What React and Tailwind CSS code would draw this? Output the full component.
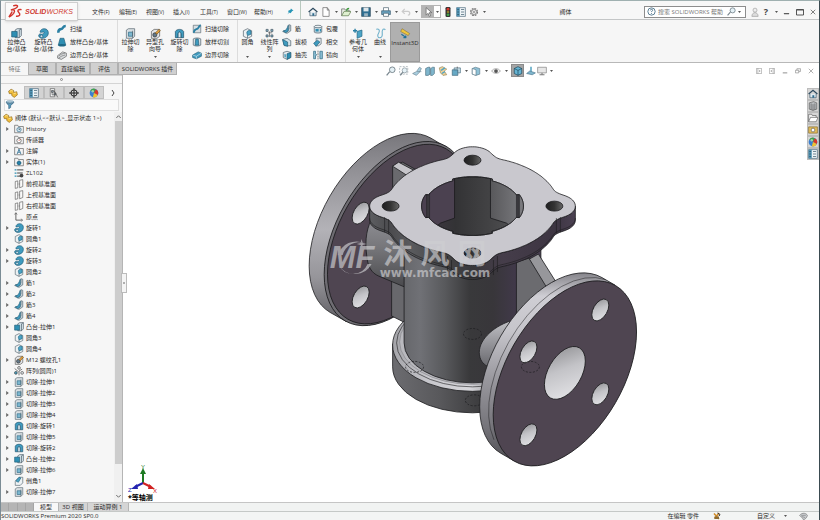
import React, { useState } from 'react';

const glyphs = {
    boss: <><path d="M6 3l3-2h6v10l-3 3H6z" fill="#d5e3ea" stroke="#40525e" /><path d="M1 5h8v8H1z" fill="#2f8fb3" stroke="#1d5a75" /><path d="M12 3v11M12 3l3-2" stroke="#40525e" /></>,
    revolve: <><path d="M3 6c0-3 3-5 6-5 4 0 6 3 6 6 0 5-4 8-9 8-3 0-5-2-5-4 0-2 2-3 4-2 2 0 4-1 4-3-2-1-3 1-6 0z" fill="#3f9bbf" stroke="#1e5b77" /><circle cx="5" cy="12" r="2" fill="#cfe3ec" stroke="#1e5b77" /></>,
    sweep: <path d="M2 14c0-4 1-6 5-6 3 0 2-5 7-5" fill="none" stroke="#2a7fa3" strokeWidth="4" />,
    loft: <><path d="M5 2h6l3 11H2z" fill="#2f8fb3" stroke="#1d5a75" /><ellipse cx="8" cy="13" rx="6" ry="2" fill="#1f6886" /></>,
    boundary: <><path d="M1 9l8-6 6 2v5l-8 5-6-2z" fill="#d9dcde" stroke="#555" /><path d="M3 10c3-4 6-4 10-5M3 13c3-3 6-4 10-5" fill="none" stroke="#666" /></>,
    cut: <><path d="M2 3l3-2h9v11l-3 3H2z" fill="#d8dfe3" stroke="#55636c" /><path d="M5 6h6v6H5z" fill="#7cb7cf" stroke="#2d6a86" /><path d="M11 4v11" stroke="#55636c" /></>,
    cutRevolve: <><path d="M2 14V5c2-4 10-4 12 0v9h-4V8H6v6z" fill="#3f9bbf" stroke="#1e4f68" /><path d="M6 8l2-3 2 3v6H6z" fill="#dbe8ee" stroke="#1e4f68" /></>,
    cutSweep: <><path d="M2 2h12v12H2z" fill="#d8dfe3" stroke="#55636c" /><path d="M3 14c0-5 2-5 5-6 3 0 2-5 6-6" stroke="#2a7fa3" strokeWidth="3" /></>,
    cutLoft: <><path d="M2 3c3-2 9-2 12 0v10c-3 2-9 2-12 0z" fill="#d8dfe3" stroke="#40525e" /><path d="M6 3h4l1 10H5z" fill="#3f9bbf" stroke="#1d5a75" /></>,
    cutBoundary: <><path d="M1 8l9-5 5 2v5l-8 4-6-2z" fill="#3f9bbf" stroke="#1d5a75" /><path d="M1 8l6 2 8-5M7 10v4" fill="none" stroke="#d5e9f1" /></>,
    hole: <><path d="M2 5l4-3h8v10l-4 3H2z" fill="#e2e4e6" stroke="#555" /><circle cx="7" cy="10" r="3" fill="#63798a" stroke="#333" /><path d="M8 7l5-5 2 2-5 5z" fill="#e7a341" stroke="#704c12" /></>,
    fillet: <><path d="M2 4l6-3 6 3v8l-6 3-6-3z" fill="#edf1f3" stroke="#50606a" /><path d="M7 7c0-3 3-4 6-3v5l-5 2z" fill="#4ca4c6" stroke="#1f6582" /><path d="M8 11v4" stroke="#50606a" /></>,
    chamfer: <><path d="M2 8l6-6h6v9l-4 4H2z" fill="#edf1f3" stroke="#50606a" /><path d="M3 8l5-6 3 1-4 7z" fill="#4ca4c6" stroke="#1f6582" /></>,
    rib: <><path d="M1 12l7 3 6-4V2l-3-1v7z" fill="#c4ccd1" stroke="#4f6470" /><path d="M2 11c5 0 6-4 8-9v9l-4 3z" fill="#3f9bbf" stroke="#1e5b77" /></>,
    draft: <><path d="M1 4l7-2 6 4v8H4z" fill="#d5e3ea" stroke="#40525e" /><path d="M1 4l8 4v7l-6-2z" fill="#3f9bbf" stroke="#1d5a75" /></>,
    shell: <><path d="M2 4l6-2 6 2v8l-6 3-6-3z" fill="#e5ebee" stroke="#40525e" /><path d="M8 6l6-2v8l-6 3z" fill="#2f8fb3" stroke="#1d5a75" /><path d="M4 6v5l2 1V7z" fill="#2f8fb3" /></>,
    wrap: <><path d="M2 4v9c2 2 10 2 12 0V4z" fill="#cddbe2" stroke="#40525e" /><ellipse cx="8" cy="4" rx="6" ry="2" fill="#edf3f5" stroke="#40525e" /><path d="M4 8h5v4H4zM11 8h2v4h-2z" fill="#2f8fb3" /></>,
    intersect: <><path d="M5 2h8v9l-4 3H5z" fill="#e5ebee" stroke="#40525e" /><path d="M1 10l6-5 4 3-6 7z" fill="#3f9bbf" stroke="#1d5a75" /></>,
    mirror: <><path d="M1 2v12h3V9l2-1-2-2V2zM15 2v12h-4V2z" fill="#8fc2d7" stroke="#1d5a75" /><path d="M8 1v14" stroke="#333" strokeDasharray="3 1" /></>,
    pattern: <><path d="M3 2h3v3H3zM10 2h3v3h-3zM3 10h3v3H3zM10 10h3v3h-3z" fill="#89b6c9" stroke="#40525e" /><path d="M6 7l6 0M8 5v8" stroke="#555" /></>,
    circPattern: <><circle cx="8" cy="3" r="2.2" fill="#e0e4e6" stroke="#444" /><circle cx="3" cy="11" r="2.2" fill="#4ca4c6" stroke="#333" /><circle cx="13" cy="11" r="2.2" fill="#e0e4e6" stroke="#444" /><path d="M1 4l6 5M8 15V8l5-3" stroke="#333" fill="none" /></>,
    refGeo: <><path d="M6 5l7-2v9l-7 3z" fill="#4ca4c6" stroke="#1f6582" /><path d="M3 1v6M0 4h6" stroke="#2a7fa3" strokeWidth="2" /></>,
    curve: <path d="M2 2c5-2 5 3 3 6s-1 7 3 6c5-1 1-8 3-11 1-2 3-2 4 0" fill="none" stroke="#6fb0ca" strokeWidth="1.6" />,
    instant: <><path d="M3 1l11 7-2 3L1 5z" fill="#f0c63c" stroke="#6a5620" strokeWidth=".6" /><path d="M2 9l7 5M9 14l-1-3M9 14l-4 0" stroke="#1c6f97" strokeWidth="1.6" /></>,
    home: <><path d="M3 8v6h10V8" fill="#dfe9ef" stroke="#2d4a5f" /><path d="M1 8l7-6 7 6" fill="none" stroke="#2d4a5f" strokeWidth="2" /><path d="M7 10h3v4H7z" fill="#2d6a8c" /></>,
    doc: <path d="M3 1h7l3 4v10H3zM10 1v4h3" fill="#fff" stroke="#555" />,
    open: <><path d="M1 14V3h5l1 2h6v3" fill="#e9efe4" stroke="#555" /><path d="M1 14l4-7h11l-4 7z" fill="#dff0d0" stroke="#4b6b3a" /><path d="M9 6c0-3 2-4 4-4" fill="none" stroke="#3b9b39" strokeWidth="2" /></>,
    save: <><path d="M1 1h14v14H1z" fill="#2f6f92" stroke="#2a4454" /><path d="M4 1h8v6H4z" fill="#dfe6ea" /><path d="M5 10h6v5H5z" fill="#9ab4c2" /></>,
    print: <><path d="M4 6V1h8v5" fill="#fff" stroke="#3d5563" /><path d="M1 6h14v6H1z" fill="#6ba3bf" stroke="#2e5266" /><path d="M4 10h8v5H4z" fill="#fff" stroke="#3d5563" /></>,
    undo: <path d="M6 3L2 7l4 4M2 7h9c4 0 4 6 0 6" fill="none" stroke="#cbcbcb" strokeWidth="2" />,
    cursor: <path d="M5 1v12l3-3 2 5 2-1-2-5h4z" fill="#fff" stroke="#555" />,
    lights: <><rect x="4" y="0" width="8" height="16" rx="2" fill="#333" /><circle cx="8" cy="3.5" r="2.2" fill="#d8372c" /><circle cx="8" cy="8" r="2" fill="#8c7d2c" /><circle cx="8" cy="12.5" r="2.2" fill="#3fa24a" /></>,
    list: <><path d="M1 1h14v14H1z" fill="#eef4f7" stroke="#3f5f72" /><path d="M1 1h5v14H1z" fill="#4f93b3" /><path d="M8 4h5M8 8h5M8 12h5M2 4h3M2 8h3M2 12h3" stroke="#26485b" /></>,
    gear: <><circle cx="8" cy="8" r="5.5" fill="none" stroke="#777" strokeWidth="2" strokeDasharray="3 1.3" /><circle cx="8" cy="8" r="4" fill="#eee" stroke="#666" /><circle cx="8" cy="8" r="1.5" fill="#888" /></>,
    pin: <path d="M9 1l6 5-3 1-3 4-2 1-2-2-4 5 3-6-2-2 6-3z" fill="#2795b6" />,
    part: <><path d="M1 5l4-3 4 2v3l5-1 1 5-5 4-4-3V9L2 9z" fill="#f0bd3b" stroke="#8a651a" /><path d="M3 5l3-1 2 1M9 9l4-1" stroke="#fff2b8" fill="none" /></>,
    config: <><path d="M2 1h7v13H2z" fill="#f4f6f7" stroke="#555" /><path d="M4 4h3v3H4zM8 8h3v3H8z" fill="#89a" stroke="#444" /><path d="M8 4l6 11M5 7v4h4" stroke="#444" fill="none" /></>,
    target: <><circle cx="8" cy="8" r="5" fill="none" stroke="#222" strokeWidth="1.6" /><path d="M8 0v16M0 8h16" stroke="#222" strokeWidth="1.6" /></>,
    ball: <><circle cx="8" cy="8" r="7" fill="#3b7fd0" /><path d="M8 8L2 4a7 7 0 0 1 9-2z" fill="#3fa24a" /><path d="M8 8l3-6a7 7 0 0 1 3 9z" fill="#d8372c" /><path d="M8 8l6 3a7 7 0 0 1-8 4z" fill="#f1c12e" /><circle cx="6" cy="5" r="2" fill="#fff" opacity=".5" /></>,
    filter: <><ellipse cx="8" cy="3" rx="6" ry="1.6" fill="#d6e5ee" stroke="#2d6a8c" /><path d="M2 4l4 5v5l3-2V9l5-5c-2 2-10 2-12 0z" fill="#5b9fc0" stroke="#2d5a78" /></>,
    folder: <><path d="M1 14V2h5l1 2h6v3" fill="#f2f2f2" stroke="#555" /><path d="M1 14l3-7h12l-3 7z" fill="#fff" stroke="#555" /></>,
    history: <><path d="M1 14V2h5l1 2h8v10z" fill="#f2f2f2" stroke="#555" /><circle cx="8" cy="9" r="3.5" fill="#cfe3ec" stroke="#2d6a8c" /><path d="M8 7v2l2-1" stroke="#2d4a5f" fill="none" /></>,
    sensor: <><path d="M1 14V2h5l1 2h8v10z" fill="#f2f2f2" stroke="#555" /><circle cx="8" cy="9" r="3.5" fill="#fff" stroke="#444" /><path d="M8 9l2-2" stroke="#c32" strokeWidth="1.5" /></>,
    note: <><path d="M1 14V2h5l1 2h8v10z" fill="#f2f2f2" stroke="#555" /><path d="M5 13l3-8 3 8M6 10h4" stroke="#20658c" strokeWidth="1.2" fill="none" /></>,
    solid: <><path d="M1 14V2h5l1 2h8v10z" fill="#f2f2f2" stroke="#555" /><path d="M5 8l3-2 3 2v3l-3 2-3-2z" fill="#2380aa" stroke="#114d69" /></>,
    material: <><path d="M1 3h3M1 8h3M1 13h3" stroke="#2f8fb3" strokeWidth="2" /><path d="M5 3h10M5 8h9M5 13h5" stroke="#444" strokeWidth="1.6" /><circle cx="12" cy="12" r="3" fill="#444" /></>,
    plane: <><path d="M2 4l4-1v11l-4 1z M9 2l5-1v11l-5 2z" fill="#fafafa" stroke="#555" /><path d="M6 8h3" stroke="#444" strokeDasharray="1 1" /></>,
    origin: <><path d="M3 2v11h9" fill="none" stroke="#444" strokeWidth="1.3" /><path d="M1 4l2-3 2 3M11 11l3 2-3 2" fill="none" stroke="#444" /></>,
    zoomFit: <><circle cx="10" cy="6" r="4.5" fill="#e5f1f6" stroke="#77858d" strokeWidth="1.5" /><path d="M6 9l-5 6" stroke="#77858d" strokeWidth="2" /></>,
    zoomArea: <><path d="M1 1h13v12H1z" fill="none" stroke="#8a979e" strokeDasharray="3 2" /><circle cx="9" cy="7" r="4" fill="#e5f1f6" stroke="#77858d" /><path d="M6 10l-4 5" stroke="#77858d" strokeWidth="2" /></>,
    prevView: <><path d="M1 12l6-3 5-7 3 2-3 6-5 5z" fill="#a9cfe0" stroke="#66808e" /><path d="M8 9h7" stroke="#66808e" /></>,
    section: <><path d="M1 4l4-2h3v11l-3 2H1zM9 4l3-2h3v10l-3 3H9z" fill="#7fb6cd" stroke="#4a6c7c" /></>,
    dynamic: <><path d="M2 3l5-2 7 4-4 3 4 6-6 1-4-4z" fill="#ecd09a" stroke="#93804f" /><path d="M5 7l6-4M6 12l5-3" stroke="#4ca4c6" strokeWidth="2" /></>,
    orient: <><path d="M2 6h9v9H2z" fill="#67a9c5" stroke="#3c6376" /><path d="M5 3h10v8h-4V6H5z" fill="#c9dfe8" stroke="#3c6376" /><path d="M10 1v3" stroke="#333" /></>,
    style: <><path d="M2 4l5-2 7 2v9l-6 2-6-2z" fill="#8fc2d7" stroke="#5a7787" /><path d="M2 4l6 2v9l-6-2z" fill="#fff" stroke="#5a7787" /></>,
    eye: <><path d="M1 8c3-5 11-5 14 0-3 5-11 5-14 0z" fill="#f3f3f3" stroke="#8c8c8c" /><circle cx="8" cy="8" r="3" fill="#555" /></>,
    cube: <><path d="M8 1l6 3v8l-6 3-6-3V4z" fill="#65b4d3" stroke="#143c4f" /><path d="M2 4l6 3 6-3M8 7v8" fill="none" stroke="#143c4f" /></>,
    scene: <><path d="M8 1v8" stroke="#2f8fb3" strokeWidth="2" /><path d="M1 12l5-4 9 3-5 3z" fill="#7fb6cd" stroke="#44718a" /></>,
    monitor: <><path d="M1 2h14v9H1z" fill="#e7e7e7" stroke="#777" /><path d="M8 11v3M4 14h8" stroke="#777" strokeWidth="1.6" /></>,
    tools: <><path d="M2 3l10 11M12 2L3 13" stroke="#d08a25" strokeWidth="3" /><path d="M9 2l5 3-2 3" stroke="#333" strokeWidth="2" fill="none" /><path d="M3 9h9v5H3z" fill="#8b6a32" /></>,
    library: <><path d="M2 3l7-2 5 2v10l-6 2-6-2z" fill="#b9bcbf" stroke="#555" /><path d="M5 4v10M8 5v10M11 4v10" stroke="#555" /></>,
    palette: <><path d="M1 3h14v10H1z" fill="#e3bd5c" stroke="#7d6528" /><circle cx="8" cy="8" r="3" fill="#fff" stroke="#555" /></>,
    user: <><circle cx="8" cy="5" r="3.2" fill="#eee" stroke="#999" /><path d="M3 15c0-8 10-8 10 0z" fill="#ddd" stroke="#999" /></>,
    help: <><circle cx="8" cy="8" r="6.5" fill="#fff" stroke="#35617c" strokeWidth="1.4" /><path d="M6 6c0-3 5-2 4 0 0 1-2 1-2 3M8 11v1.5" fill="none" stroke="#35617c" strokeWidth="1.5" /></>,
    min: <path d="M2 13h12" stroke="currentColor" strokeWidth="2.5" />,
    max: <path d="M1 3h14v11H1zM1 4h14" fill="none" stroke="currentColor" strokeWidth="1.8" />,
    close: <path d="M2 2l12 12M14 2L2 14" stroke="currentColor" strokeWidth="1.8" />,
    restore: <path d="M1 6h9v7H1zM5 6V2h10v7h-5" fill="none" stroke="currentColor" strokeWidth="1.8" />,
    paneLeft: <path d="M1 1h14v14H1zM5 1v14M12 8H8l2-2M8 8l2 2" fill="none" stroke="currentColor" strokeWidth="1.5" />,
    paneRight: <path d="M1 1h14v14H1zM11 1v14M4 8h4L6 6M8 8l-2 2" fill="none" stroke="currentColor" strokeWidth="1.5" />,
    tag: <><path d="M1 6c5-6 12-4 14 0-1 5-5 7-7 8-1-4-5-5-7-8z" fill="#c9cdd0" stroke="#666" /><path d="M4 6h8M5 8l6 2" stroke="#777" /></>,
};

const Icon = ({ name, className = 'size-[10px]' }) => (
    <svg viewBox="0 0 16 16" className={`${className} shrink-0`} fill="none" aria-hidden="true">{glyphs[name]}</svg>
);

const Caret = ({ className = 'w-[10px]' }) => (
    <span className={`${className} flex justify-center`}>
        <svg viewBox="0 0 6 4" className="w-[3px] h-[2px]"><path d="M0 0h6L3 4z" fill="#555" /></svg>
    </span>
);

const menus = [['文件', 'F'], ['编辑', 'E'], ['视图', 'V'], ['插入', 'I'], ['工具', 'T'], ['窗口', 'W'], ['帮助', 'H']];

const ribbonTabs = [
    { label: '草图', width: 'w-[28px]' },
    { label: '直接编辑', width: 'w-[34px]' },
    { label: '评估', width: 'w-[28px]' },
    { label: 'SOLIDWORKS 插件', width: 'w-[59px]' },
];

const tree = [
    ['history', 'History', true], ['sensor', '传感器'], ['note', '注解', true], ['solid', '实体(1)', true],
    ['material', 'ZL102'], ['plane', '前视基准面'], ['plane', '上视基准面'], ['plane', '右视基准面'], ['origin', '原点'],
    ['revolve', '旋转1', true], ['fillet', '圆角1'], ['revolve', '旋转2', true], ['revolve', '旋转3', true], ['fillet', '圆角2'],
    ['rib', '筋1', true], ['rib', '筋2', true], ['rib', '筋3', true], ['rib', '筋4', true], ['boss', '凸台-拉伸1', true],
    ['fillet', '圆角3'], ['fillet', '圆角4'], ['hole', 'M12 螺纹孔1', true], ['circPattern', '阵列(圆周)1'],
    ['cut', '切除-拉伸1', true], ['cut', '切除-拉伸2', true], ['cut', '切除-拉伸3', true], ['cut', '切除-拉伸4', true],
    ['cutRevolve', '切除-旋转1', true], ['cut', '切除-拉伸5', true], ['cutRevolve', '切除-旋转2', true],
    ['boss', '凸台-拉伸2', true], ['cut', '切除-拉伸6', true], ['chamfer', '倒角1'], ['cut', '切除-拉伸7', true],
];

const TitleBar = () => (
    <header className="flex items-center h-[19px] bg-[#f7f7f7] border-b border-[#c4c6c7] shrink-0">
        <div className="relative z-10 ml-[4px] mt-[3px] flex items-center w-[73px] h-[19px] bg-[#fafafa] border border-[#cfcfcf] shadow-sm shrink-0">
            <svg viewBox="0 0 32 32" className="size-[15px] ml-[2px]" fill="none" stroke="#d2342c" strokeWidth="3">
                <path d="M11 4c9-3 12 0 7 4-4 3-9 4-12 5 8-2 10 1 6 7-3 4-6 6-10 8M9 16c-3 6-5 8-7 12" />
                <path d="M29 12c-8-1-10 2-6 6s3 9-6 8" />
            </svg>
            <span className="ml-[2px] text-[7px] leading-none italic text-[#cf3a33] font-['Liberation_Sans',sans-serif]"><b>SOLID</b>WORKS</span>
        </div>
        <nav className="flex ml-[14px] mt-[3px] shrink-0">
            {menus.map(([label, key]) => (
                <button key={key} className="w-[27px] text-left whitespace-nowrap">{label}<span className="text-[5px]">({key})</span></button>
            ))}
        </nav>
        <button aria-label="固定" className="w-[20px] pt-[3px] flex justify-center border-r border-[#b9c9bf] h-full items-center shrink-0"><Icon name="pin" className="size-[7px]" /></button>
        <div className="flex items-center ml-[7px] mt-[3px] shrink-0">
            <button aria-label="主页" className="mr-[3px]"><Icon name="home" /></button>
            {['doc', 'open', 'save', 'print', 'undo'].map((name) => (
                <button key={name} aria-label={name} className="flex items-center"><Icon name={name} /><Caret /></button>
            ))}
            <button aria-label="选择" className="flex items-center h-[13px] border border-[#b5b5b5] bg-white">
                <span className="w-[12px] h-full flex items-center justify-center bg-[#b4b4b4]"><Icon name="cursor" /></span>
                <Caret className="w-[6px]" />
            </button>
            <button aria-label="重建" className="ml-[2px]"><Icon name="lights" /></button>
            <button aria-label="文件属性" className="ml-[3px]"><Icon name="list" /></button>
            <button aria-label="选项" className="ml-[3px] flex items-center"><Icon name="gear" /><Caret /></button>
        </div>
        <h1 className="flex-1 text-center mt-[3px] pr-[2px]">阀体</h1>
        <div className="flex items-center w-[102px] h-[12px] mt-[3px] px-[2px] border border-[#8d8d8d] bg-white shrink-0">
            <Icon name="help" className="size-[9px]" />
            <input aria-label="搜索帮助" placeholder="搜索 SOLIDWORKS 帮助" className="flex-1 min-w-0 ml-[2px] bg-transparent outline-none placeholder:text-[#777]" />
            <Icon name="zoomFit" className="size-[9px]" />
            <Caret className="w-[7px]" />
        </div>
        <div className="flex items-center text-[#444] ml-[4px] mt-[3px] shrink-0">
            <button aria-label="用户"><Icon name="user" /></button>
            <button className="w-[12px] text-[9px] leading-none font-bold">?</button>
            <Caret className="w-[8px]" />
            <button aria-label="最小化" className="w-[13px] flex justify-center"><Icon name="min" className="size-[7px]" /></button>
            <button aria-label="最大化" className="w-[13px] flex justify-center"><Icon name="max" className="size-[8px]" /></button>
            <button aria-label="关闭" className="w-[13px] flex justify-center"><Icon name="close" className="size-[6px]" /></button>
        </div>
    </header>
);

const BigButton = ({ icon, lines, width, caret }) => (
    <button className={`${width} flex flex-col items-center h-full pt-[8px] leading-[7px]`}>
        <Icon name={icon} className="size-[11px]" />
        {lines.map((line) => <span key={line} className="whitespace-nowrap">{line}</span>)}
        {caret && <span className="mt-auto pb-[4px]"><Caret /></span>}
    </button>
);

const SmallColumn = ({ items, width }) => (
    <div className={`${width} flex flex-col pt-[2px]`}>
        {items.map(([icon, label]) => (
            <button key={label} className="flex items-center gap-[3px] h-[13px] whitespace-nowrap"><Icon name={icon} />{label}</button>
        ))}
    </div>
);

const Ribbon = () => (
    <div className="flex h-[43px] bg-[#f6f6f6] border-b border-[#b8b8b8] shrink-0">
        <div className="flex pl-[2px] border-r border-[#dcdcdc]">
            <BigButton icon="boss" lines={['拉伸凸', '台/基体']} width="w-[27px]" />
            <BigButton icon="revolve" lines={['旋转凸', '台/基体']} width="w-[27px]" />
            <SmallColumn items={[['sweep', '扫描'], ['loft', '放样凸台/基体'], ['boundary', '边界凸台/基体']]} width="w-[60px]" />
        </div>
        <div className="flex border-r border-[#dcdcdc]">
            <BigButton icon="cut" lines={['拉伸切', '除']} width="w-[25px]" />
            <BigButton icon="hole" lines={['异型孔', '向导']} width="w-[24px]" caret />
            <BigButton icon="cutRevolve" lines={['旋转切', '除']} width="w-[25px]" />
            <SmallColumn items={[['cutSweep', '扫描切除'], ['cutLoft', '放样切割'], ['cutBoundary', '边界切除']]} width="w-[45px]" />
        </div>
        <div className="flex border-r border-[#dcdcdc]">
            <BigButton icon="fillet" lines={['圆角']} width="w-[19px]" caret />
            <BigButton icon="pattern" lines={['线性阵', '列']} width="w-[25px]" caret />
            <SmallColumn items={[['rib', '筋'], ['draft', '拔模'], ['shell', '抽壳']]} width="w-[31px]" />
            <SmallColumn items={[['wrap', '包覆'], ['intersect', '相交'], ['mirror', '镜向']]} width="w-[32px]" />
        </div>
        <BigButton icon="refGeo" lines={['参考几', '何体']} width="w-[24px]" caret />
        <BigButton icon="curve" lines={['曲线']} width="w-[20px]" caret />
        <button className="w-[30px] h-[40px] mt-[2px] pt-[5px] flex flex-col items-center bg-[#b0b0b0] border border-[#9a9a9a]">
            <Icon name="instant" className="size-[11px]" />
            Instant3D
        </button>
    </div>
);

const ViewToolbar = () => (
    <div className="flex items-center h-[13px] mt-[1px]">
        {['zoomFit', 'zoomArea', 'prevView', 'section', 'dynamic'].map((name) => (
            <button key={name} aria-label={name} className="w-[13px]"><Icon name={name} /></button>
        ))}
        {['orient', 'style', 'eye'].map((name) => (
            <button key={name} aria-label={name} className="flex items-center"><Icon name={name} /><Caret /></button>
        ))}
        <button aria-label="上色" className="size-[13px] flex items-center justify-center bg-[#a5a5a5] border border-[#8b8b8b]"><Icon name="cube" /></button>
        <button aria-label="布景" className="w-[13px] flex justify-center"><Icon name="scene" /></button>
        <button aria-label="视图设定" className="flex items-center"><Icon name="monitor" /><Caret className="w-[8px]" /></button>
    </div>
);

const FeaturePanel = () => {
    const [selected, setSelected] = useState(null);

    return (
        <aside className="w-[122px] flex flex-col bg-[#f6f6f6] border-r border-[#b5b5b5] shrink-0">
            <div className="h-[9px] border-y border-[#d4d4d4] flex items-center justify-center shrink-0">
                <span className="size-[3px] rounded-full border border-[#888]" />
            </div>
            <div className="flex h-[15px] pt-[2px] pl-[1px] shrink-0">
                <button aria-label="特征树" className="w-[22px] flex items-center justify-center"><Icon name="part" /></button>
                {['list', 'config', 'target', 'ball'].map((name) => (
                    <button key={name} aria-label={name} className="w-[20px] flex items-center justify-center bg-[#d3d3d3] border border-[#bdbdbd]"><Icon name={name} /></button>
                ))}
                <button aria-label="更多" className="flex-1 flex justify-center items-center">
                    <svg viewBox="0 0 4 6" className="w-[4px] h-[6px]" fill="none" stroke="#444"><path d="M1 0l2 3-2 3" /></svg>
                </button>
            </div>
            <div className="flex items-center h-[12px] mx-[3px] border border-[#dedede] bg-[#fafafa] shrink-0">
                <Icon name="filter" />
                <input aria-label="过滤" className="flex-1 min-w-0 bg-transparent outline-none" />
            </div>
            <div className="flex flex-1 min-h-0 pt-[1px]">
                <div className="flex-1 min-w-0 overflow-hidden">
                    <div className="flex items-center h-[11px] pl-[2px] gap-[2px] whitespace-nowrap"><Icon name="part" />阀体 (默认&lt;&lt;默认&gt;_显示状态 1&gt;)</div>
                    <ul>
                        {tree.map(([icon, label, open]) => (
                            <li key={label}>
                                <button
                                    onClick={() => setSelected(label)}
                                    className={`flex items-center w-full h-[11px] whitespace-nowrap ${selected === label ? 'bg-[#cde4f2]' : ''}`}
                                >
                                    <span className="w-[13px] flex justify-center">
                                        {open && <svg viewBox="0 0 4 6" className="w-[3px] h-[4px]"><path d="M0 0l4 3-4 3z" fill="#666" /></svg>}
                                    </span>
                                    <Icon name={icon} />
                                    <span className="ml-[2px]">{label}</span>
                                </button>
                            </li>
                        ))}
                    </ul>
                </div>
                <div className="w-[8px] flex flex-col items-center bg-[#f0f0f0]">
                    <svg viewBox="0 0 6 4" className="w-[5px] h-[3px] my-[3px] shrink-0" fill="none" stroke="#444"><path d="M0 4l3-3 3 3" /></svg>
                    <div className="w-[7px] h-[88%] bg-[#cdcdcd]" />
                    <svg viewBox="0 0 6 4" className="w-[5px] h-[3px] mt-auto mb-[4px] shrink-0" fill="none" stroke="#444"><path d="M0 0l3 3 3-3" /></svg>
                </div>
            </div>
        </aside>
    );
};

// Cover flange outline: disc plus four lugs, blended with a small fillet
const CX = 473;
const CY = 206;
const K = 0.577;
const lugs = [[82, 0], [0, 82], [-82, 0], [0, -82]];

const coverDistance = (x, y) => {
    const disc = Math.hypot(x, y) - 86;
    const lug = Math.min(...lugs.map(([lx, ly]) => Math.hypot(x - lx, y - ly) - 21));
    const h = Math.max(9 - Math.abs(disc - lug), 0) / 9;
    return Math.min(disc, lug) - (h * h * 9) / 4;
};

const polar = (r, deg) => {
    const a = (deg * Math.PI) / 180;
    return [CX + r * Math.cos(a), CY + r * Math.sin(a) * K];
};

const coverPoint = (deg) => {
    const a = (deg * Math.PI) / 180;
    let lo = 60;
    let hi = 120;
    for (let i = 0; i < 18; i++) {
        const mid = (lo + hi) / 2;
        if (coverDistance(mid * Math.cos(a), mid * Math.sin(a)) < 0) lo = mid;
        else hi = mid;
    }
    return polar(lo, deg);
};

// The bore is a little wider at the four axes, where the slots are
const borePoint = (deg) => {
    const off = Math.abs(((deg + 45) % 90) - 45);
    return polar(off < 24 ? 51 : 48, deg);
};

const toPath = (points, dy = 0) => points.map(([x, y]) => `${x.toFixed(1)} ${(y + dy).toFixed(1)}`).join('L');

const frontPoints = Array.from({ length: 181 }, (_, i) => coverPoint(i));
const coverTop = `M${toPath(Array.from({ length: 360 }, (_, i) => coverPoint(i)))}Z`;
const coverSide = `M${toPath(frontPoints)}L${toPath([...frontPoints].reverse(), 14)}Z`;
const coverLip = `M${toPath(frontPoints, 12)}`;
const boreOutline = `M${toPath(Array.from({ length: 360 }, (_, i) => borePoint(i)))}Z`;

const Grad = ({ id, stops, vertical, from, to }) => (
    <linearGradient id={id} gradientUnits="userSpaceOnUse" x1={vertical ? 0 : from} x2={vertical ? 0 : to} y1={vertical ? from : 0} y2={vertical ? to : 0}>
        {stops.map(([offset, color]) => <stop key={offset} offset={offset} stopColor={color} />)}
    </linearGradient>
);

const SideHole = ({ x, y, rx = 7, ry = 12 }) => (
    <ellipse rx={rx} ry={ry} transform={`translate(${x} ${y}) rotate(30)`} fill="url(#sideHole)" />
);

const ValveBody = () => (
    <svg viewBox="123 75 697 427" className="absolute inset-0 w-full h-full" role="img" aria-label="阀体">
        <defs>
            <Grad id="rimL" vertical from={132} to={326} stops={[[0, '#77767b'], [0.2, '#929196'], [0.5, '#b3b2b7'], [0.75, '#96959a'], [1, '#5b5a5f']]} />
            <Grad id="rimR" vertical from={273} to={466} stops={[[0, '#86858b'], [0.12, '#cfced4'], [0.3, '#c6c5cb'], [0.55, '#99989e'], [0.8, '#75747a'], [1, '#4b4a4f']]} />
            <Grad id="body" from={404} to={542} stops={[[0, '#66676b'], [0.12, '#707176'], [0.3, '#58595c'], [0.48, '#39393b'], [0.65, '#38363a'], [0.82, '#41394a'], [1, '#4a4052']]} />
            <Grad id="base" from={393} to={553} stops={[[0, '#6c6c70'], [0.3, '#58585b'], [0.55, '#3c3c3e'], [1, '#3e3945']]} />
            <Grad id="ring" from={393} to={490} stops={[[0, '#a4a4a9'], [0.35, '#c6c6cb'], [0.8, '#d6d6da'], [1, '#a8a8ac']]} />
            <Grad id="cover" from={370} to={576} stops={[[0, '#5d5e61'], [0.1, '#4b4b4e'], [0.2, '#5a5b5e'], [0.36, '#454547'], [0.5, '#39383b'], [0.65, '#453d4a'], [0.9, '#3d3542'], [1, '#4b4152']]} />
            <Grad id="bore" from={430} to={517} stops={[[0, '#3d3741'], [0.3, '#333335'], [0.7, '#434345'], [1, '#525254']]} />
            <Grad id="boreRight" from={491} to={524} stops={[[0, '#58585b'], [1, '#7c7c80']]} />
            <Grad id="neckL" vertical from={218} to={290} stops={[[0, '#8f8f94'], [0.4, '#77777b'], [1, '#464649']]} />
            <Grad id="neckR" vertical from={320} to={370} stops={[[0, '#c2c2c7'], [0.4, '#9b9ba0'], [1, '#626267']]} />
            <linearGradient id="sideHole" x1="0" y1="0" x2="0.7" y2="1">
                <stop offset="0" stopColor="#8b8b8e" />
                <stop offset="0.5" stopColor="#c3c3c7" />
                <stop offset="1" stopColor="#e0e0e3" />
            </linearGradient>
            <linearGradient id="topHole"><stop offset="0" stopColor="#1f1f20" /><stop offset="0.5" stopColor="#333" /><stop offset="1" stopColor="#666" /></linearGradient>
            <clipPath id="boreClip"><path d={boreOutline} /></clipPath>
        </defs>
        <g stroke="#1c1c1e" strokeWidth="0.8" strokeLinejoin="round">
            {/* far flange */}
            <path d="M446.500 147L431.500 138A58.200 100 30 0 0 330.500 312.500L346.500 321.500Z" fill="url(#rimL)" />
            <ellipse rx="58.500" ry="101" transform="translate(396 233.500) rotate(30)" fill="#6e6c72" />
            <ellipse rx="57" ry="98.500" transform="translate(397.500 234) rotate(30)" fill="#4f4551" />
            <SideHole x={361} y={213} />
            <SideHole x={361} y={297} />
            <path d="M393 166l10-4 16 9v30h-26z" fill="#6a6a6e" />
            <path d="M393 166l6-4 15 8-7 5z" fill="#c6c5ca" />
            <path d="M392 270h14v53l-14-7z" fill="#68686c" />
            <path d="M374 216c-7 10-9 24-7 39 1 12 5 18 12 21l26 11v-70z" fill="url(#neckL)" />
            {/* base */}
            <path d="M393 344v23a80 46 0 0 0 160 0v-23z" fill="url(#base)" />
            <ellipse cx={CX} cy="345" rx="80" ry="46.500" fill="url(#ring)" />
            <ellipse cx={CX} cy="343" rx="76" ry="44" fill="url(#ring)" strokeWidth="0.600" />
            <ellipse cx={CX} cy="342" rx="73" ry="42.500" fill="#b9b9be" stroke="#77777b" strokeWidth="0.500" />
            {/* barrel */}
            <path d="M404.500 220v123a68.500 40 0 0 0 137 0V220z" fill="url(#body)" />
            <path d="M517 262l13-4 18 28-31 50z" fill="#6b6b6f" />
            <path d="M530 259l9-5 17 27-9 6z" fill="#97979b" />
            {/* cover */}
            <path d={coverSide} fill="url(#cover)" />
            <path d={coverLip} fill="none" strokeWidth="0.600" />
            <path d={coverTop} fill="#c9c8ce" />
            <path d="M385 217v15M389 219v15M448 256v16M452 260v15M494 260v15M498 256v16M557 218v15M561 217v15" fill="none" strokeWidth="0.600" />
            <path d={boreOutline} fill="url(#bore)" />
            <g clipPath="url(#boreClip)">
                <path d="M420 170h35v48l-14 5-10 8-11-13z" fill="#4b4150" />
                <path d="M526 170h-35v48l16 5 10 8 9-13z" fill="url(#boreRight)" />
                <path d="M427 190h3v30h-3zM517 190h3v30h-3z" fill="#3a383d" strokeWidth="0.500" />
            </g>
            <path d={boreOutline} fill="none" />
            {[[473, 160], [391, 206], [555, 206], [473, 253]].map(([x, y]) => (
                <ellipse key={`${x}-${y}`} cx={x} cy={y} rx="8.500" ry="5" fill="url(#topHole)" />
            ))}
            {/* near flange */}
            <path d="M511 321c-18 6-33 20-31 34 1 7 5 10 9 12z" fill="url(#neckR)" />
            <path d="M615.700 285.100L602.700 277.600A58.300 101 30 0 0 501.200 453.400L514.200 460.900Z" fill="url(#rimR)" />
            <path d="M604.700 278.700A58.600 101.500 30 0 0 493 439" fill="none" strokeWidth="0.500" transform="translate(1.500 1)" />
            <ellipse rx="58.600" ry="101.500" transform="translate(565.500 373.500) rotate(30)" fill="#4f4551" />
            <SideHole x={565.5} y={373} rx={16.7} ry={29} />
            <SideHole x={601} y={310} />
            <SideHole x={529} y={352} />
            <SideHole x={601} y={394} />
            <SideHole x={529} y={435} />
            <g fill="none" strokeDasharray="2 1.500" strokeWidth="0.700">
                <ellipse cx="473" cy="334" rx="9" ry="5.500" />
                <ellipse cx="415" cy="367" rx="9" ry="5.500" />
                <path d="M480 396a9 5.500 0 1 0 0 9" />
                <ellipse cx="531" cy="367" rx="9" ry="5.500" />
            </g>
        </g>
        {/* site mark */}
        <g fill="#cfcfd2" opacity="0.650" fontWeight="bold">
            <path d="M365 243a20 20 0 0 0-27 12h5a17 17 0 0 1 22-12zM339 265a19 19 0 0 0 33-1h-4a16 16 0 0 1-29 1zM362 239l1 4 4 1-4 1-1 4-1-4-4-1 4-1z" />
            <text x="330" y="268" fontSize="31" fontStyle="italic" fontFamily="Liberation Sans, sans-serif">MF</text>
            <g fontSize="29" fontFamily="Noto Sans CJK SC, sans-serif">
                <text x="384" y="264">沐</text>
                <text x="421" y="264">风</text>
                <text x="458" y="264">网</text>
            </g>
            <text x="380" y="277" fontSize="12" fontFamily="DejaVu Sans, sans-serif">www.mfcad.com</text>
        </g>
    </svg>
);

const Viewport = () => (
    <main className="relative flex-1 bg-white">
        <ValveBody />
        <div className="absolute left-[5px] bottom-0">
            <svg viewBox="0 0 34 30" className="w-[34px] h-[30px]" strokeWidth="2">
                <path d="M15 19V9" stroke="#1d7a22" />
                <path d="M12 10l3-6 3 6z" fill="#1d7a22" />
                <path d="M15 19l-8 4" stroke="#2424b0" />
                <path d="M9 20l-6 5 7 0z" fill="#2424b0" />
                <path d="M15 19l8 4" stroke="#d02222" />
                <path d="M21 20l6 5-7 0z" fill="#d02222" />
                <g fontSize="6" stroke="none" fontFamily="Liberation Sans, sans-serif">
                    <text x="13" y="5" fill="#1d7a22">Y</text>
                    <text x="0" y="28" fill="#2424b0">Z</text>
                    <text x="25" y="29" fill="#d02222">X</text>
                </g>
            </svg>
            <p className="font-bold leading-[8px] text-[7px] text-black">*等轴测</p>
        </div>
        <div className="absolute left-[-2px] top-[198px] w-[6px] h-[20px] flex items-center justify-center bg-[#f4f4f4] border border-[#bbb]">
            <span className="size-[2px] rounded-full bg-[#999]" />
        </div>
        <div className="absolute right-0 top-[13px] flex flex-col">
            {['home', 'library', 'folder', 'palette', 'ball', 'list'].map((name) => (
                <button key={name} aria-label={name} className="size-[12px] flex items-center justify-center bg-[#d6d6d6] border border-[#bcbcbc]"><Icon name={name} /></button>
            ))}
        </div>
    </main>
);

const App = () => (
    <div className="h-screen flex flex-col overflow-hidden bg-white border-t border-t-[#9fb0b0] border-l border-l-[#7b8c95] border-r border-r-[#3a4a50] text-[6px] leading-[8px] text-[#2b2b2b] font-['Open_Sans','Noto_Sans_CJK_SC',sans-serif]">
        <TitleBar />
        <Ribbon />
        <div className="relative z-10 flex items-start h-[12px] shrink-0">
            <div className="flex h-full">
                <button className="w-[27px] text-[#777] bg-[#f6f6f6]">特征</button>
                {ribbonTabs.map((tab) => (
                    <button key={tab.label} className={`${tab.width} bg-[#d0d0d0] border border-t-0 border-[#b0b0b0]`}>{tab.label}</button>
                ))}
            </div>
            <div className="flex-1 flex justify-center pl-[12px]"><ViewToolbar /></div>
            <div className="flex items-center h-[15px] text-[#8a8a8a]">
                {['paneLeft', 'paneRight', 'min', 'restore', 'close'].map((name) => (
                    <button key={name} aria-label={name} className="w-[13px] flex justify-center"><Icon name={name} className="size-[6px]" /></button>
                ))}
                <span className="w-[2px]" />
            </div>
        </div>
        <div className="flex flex-1 min-h-0">
            <FeaturePanel />
            <Viewport />
        </div>
        <div className="flex h-[9px] bg-[#f1f3f2] border-t border-[#c5c5c5] shrink-0 leading-[7px]">
            <div className="w-[33px] flex bg-[#b5b5b5]">
                {['首', '上', '下', '末'].map((name) => <button key={name} aria-label={name} className="flex-1 border-r border-[#a5a5a5]" />)}
            </div>
            <button className="w-[24px] bg-[#f8f8f8]">模型</button>
            <button className="w-[30px] bg-[#d5d5d5] border-x border-[#b5b5b5]">3D 视图</button>
            <button className="w-[41px] bg-[#d5d5d5] border-r border-[#b5b5b5]">运动算例 1</button>
        </div>
        <footer className="flex items-center h-[9px] bg-[#f3f5f4] border-t border-[#c5c9c7] shrink-0">
            <span>SOLIDWORKS Premium 2020 SP0.0</span>
            <span className="ml-auto">在编辑 零件</span>
            <span className="ml-[14px]"><Icon name="tools" className="size-[8px]" /></span>
            <button className="ml-[36px] flex items-center">自定义<Caret className="w-[20px]" /></button>
            <span className="ml-[4px] mr-[11px]"><Icon name="tag" className="size-[9px]" /></span>
        </footer>
    </div>
);

export default App;
